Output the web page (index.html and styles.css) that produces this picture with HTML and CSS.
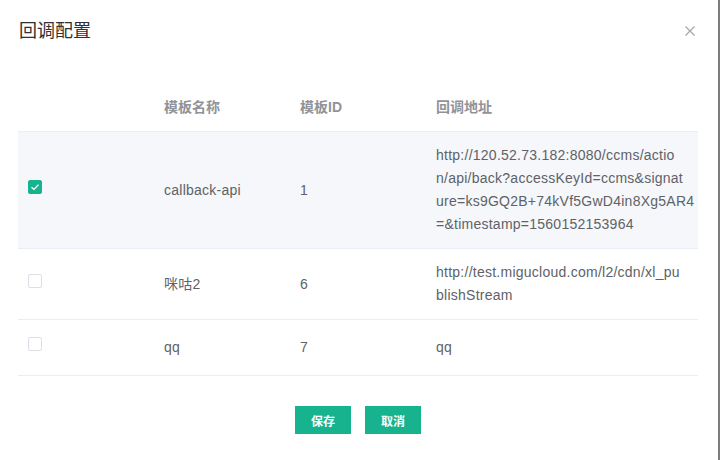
FILE: index.html
```html
<!DOCTYPE html>
<html lang="zh">
<head>
<meta charset="utf-8">
<title>回调配置</title>
<link rel="stylesheet" href="styles.css">
</head>
<body>
<div class="frame">
  <div class="dialog">
    <div class="dialog-header">
      <span class="dialog-title">回调配置</span>
      <button class="close" aria-label="关闭">
        <svg width="10" height="10" viewBox="0 0 10 10"><path d="M0.5 0.5L9.5 9.5M9.5 0.5L0.5 9.5" stroke="#a0a3a8" stroke-width="1.1" fill="none"/></svg>
      </button>
    </div>
    <table class="grid">
      <colgroup>
        <col class="c-sel"><col class="c-name"><col class="c-id"><col class="c-url">
      </colgroup>
      <thead>
        <tr><th></th><th>模板名称</th><th>模板ID</th><th>回调地址</th></tr>
      </thead>
      <tbody>
        <tr class="selected">
          <td><span class="check on"><svg width="10" height="8" viewBox="0 0 10 8"><path d="M1.5 4.2L4 6.4L8.5 1.6" stroke="#fff" stroke-width="1.3" fill="none"/></svg></span></td>
          <td>callback-api</td>
          <td>1</td>
          <td class="url">http://120.52.73.182:8080/ccms/actio<br>n/api/back?accessKeyId=ccms&amp;signat<br>ure=ks9GQ2B+74kVf5GwD4in8Xg5AR4<br>=&amp;timestamp=1560152153964</td>
        </tr>
        <tr>
          <td><span class="check"></span></td>
          <td>咪咕2</td>
          <td>6</td>
          <td class="url">http://test.migucloud.com/l2/cdn/xl_pu<br>blishStream</td>
        </tr>
        <tr class="short">
          <td><span class="check"></span></td>
          <td>qq</td>
          <td>7</td>
          <td class="url">qq</td>
        </tr>
      </tbody>
    </table>
    <div class="actions">
      <button class="btn">保存</button>
      <button class="btn">取消</button>
    </div>
  </div>
</div>
</body>
</html>
```
FILE: styles.css
```css
* { box-sizing: border-box; }
html, body { margin: 0; padding: 0; background: #fff; }
body {
  font-family: "Liberation Sans", Arial, "Noto Sans CJK SC", sans-serif;
  color: #606266;
}
.frame {
  width: 720px;
  height: 460px;
  border-right: 2px solid #7d7d7d;
  overflow: hidden;
}
.dialog { padding: 0 20px 0 18px; }
.dialog-header {
  height: 60px;
  display: flex;
  align-items: center;
  justify-content: space-between;
  padding-left: 1px;
}
.dialog-title {
  font-size: 18px;
  color: #303133;
  line-height: 24px;
  margin-top: 1px;
}
.close {
  border: 0;
  background: none;
  padding: 0;
  margin-right: 3px;
  margin-top: 2px;
  width: 10px;
  height: 10px;
  display: flex;
}
.grid {
  margin-top: 24px;
  width: 680px;
  border-collapse: collapse;
  table-layout: fixed;
  font-size: 14px;
}
.c-sel, .c-name, .c-id { width: 136px; }
.c-url { width: 272px; }
.grid th, .grid td {
  padding: 12px 10px;
  line-height: 23px;
  text-align: left;
  vertical-align: middle;
}
.grid th {
  color: #909399;
  font-weight: bold;
  border-bottom: 1px solid #ebeef5;
}
.grid td {
  border-bottom: 1px solid #ebeef5;
  letter-spacing: 0.25px;
}
.grid tr.selected td { background: #f5f7fa; }
.grid tr.short td { height: 56px; }
.grid .url { white-space: nowrap; }
.check {
  display: inline-flex;
  align-items: center;
  justify-content: center;
  width: 14px;
  height: 14px;
  border: 1px solid #dcdfe6;
  border-radius: 2px;
  background: #fff;
  vertical-align: middle;
  position: relative;
  top: -4px;
}
.check.on { background: #17b38e; border-color: #17b38e; }
.actions {
  display: flex;
  justify-content: center;
  gap: 14px;
  margin-top: 30px;
}
.btn {
  width: 56px;
  height: 28px;
  border: 0;
  border-radius: 0;
  background: #17b38e;
  color: #fff;
  font-family: "Noto Sans CJK SC", sans-serif;
  font-weight: bold;
  font-size: 12px;
  padding: 0;
}
```
